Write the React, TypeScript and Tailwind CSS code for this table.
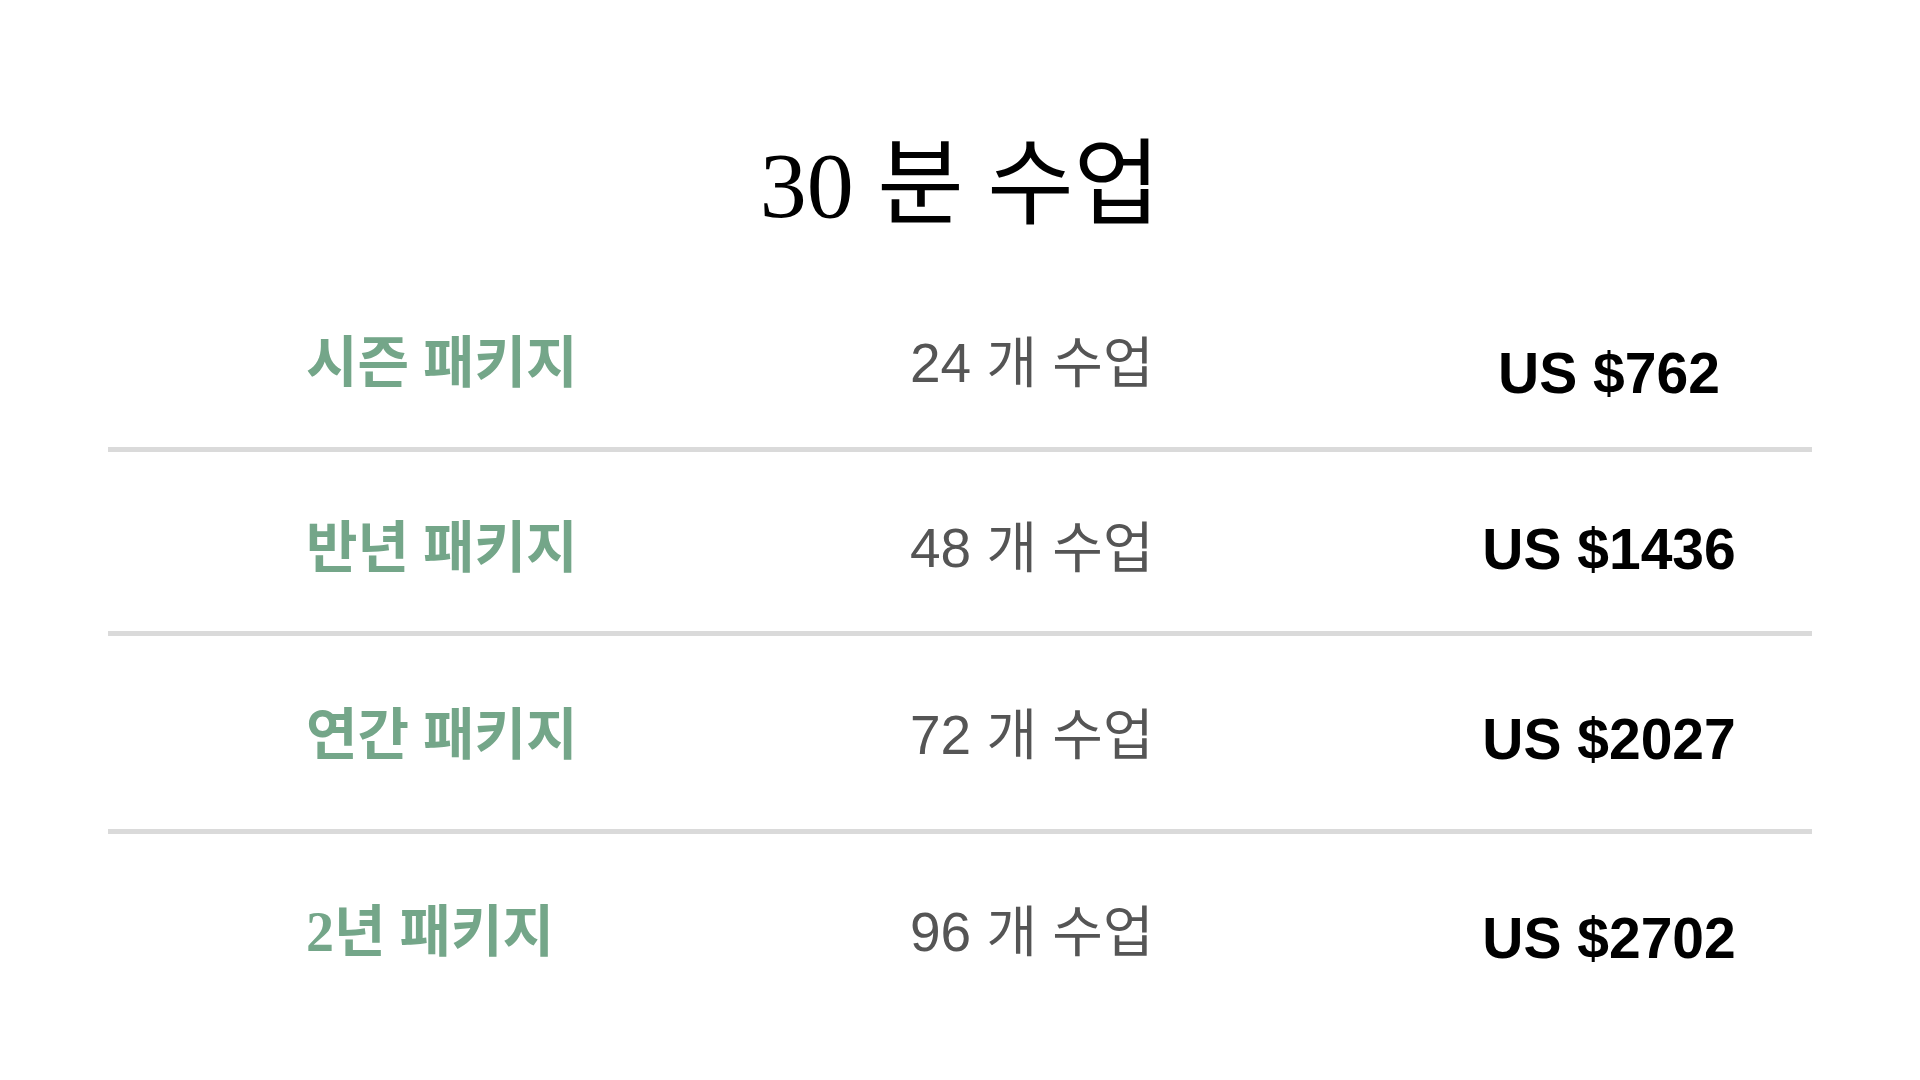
import React from "react";

const rows = [
  { label: "시즌 패키지", count: "24 개 수업", price: "US $762", pt: "pt-[96px]", pb: "pb-[52px]", off: "pt-[10px]" },
  { label: "반년 패키지", count: "48 개 수업", price: "US $1436", pt: "pt-[64px]", pb: "pb-[51px]", off: "pt-[1px]" },
  { label: "연간 패키지", count: "72 개 수업", price: "US $2027", pt: "pt-[67px]", pb: "pb-[62px]", off: "pt-[4px]" },
  { label: "2년 패키지", count: "96 개 수업", price: "US $2702", pt: "pt-[66px]", pb: "pb-[60px]", off: "pt-[6px]" },
];

export default function App() {
  return (
    <div className="w-[1920px] h-[1080px] bg-white overflow-hidden">
      <div className="pt-[135px] h-[100px] box-content flex justify-center">
        <h1
          className="text-[94px] leading-[100px] text-black font-normal whitespace-nowrap"
          style={{ fontFamily: "'Liberation Serif', 'Noto Sans CJK KR', serif" }}
        >
          30 분 수업
        </h1>
      </div>
      <div className="mx-[108px] w-[1704px]">
        {rows.map((r, i) => (
          <div
            key={i}
            className={`grid grid-cols-[600px_698px_406px] items-start ${r.pt} ${r.pb} ${
              i < rows.length - 1 ? "border-b-[5px] border-[#dadada]" : ""
            }`}
          >
            <div
              className="h-[64px] pl-[198px] text-[56px] leading-[64px] font-bold text-[#74a689] whitespace-nowrap"
              style={{ fontFamily: "'Liberation Serif', 'Noto Sans CJK KR', serif" }}
            >
              {r.label}
            </div>
            <div
              className="h-[64px] pl-[202px] text-[55px] leading-[64px] text-[#555555] whitespace-nowrap"
              style={{ fontFamily: "'Liberation Sans', 'Noto Sans CJK KR', sans-serif" }}
            >
              {r.count}
            </div>
            <div
              className={`h-[64px] text-center text-[57px] leading-[64px] font-bold text-black whitespace-nowrap ${r.off}`}
              style={{ fontFamily: "'Liberation Sans', Arial, sans-serif" }}
            >
              {r.price}
            </div>
          </div>
        ))}
      </div>
    </div>
  );
}
